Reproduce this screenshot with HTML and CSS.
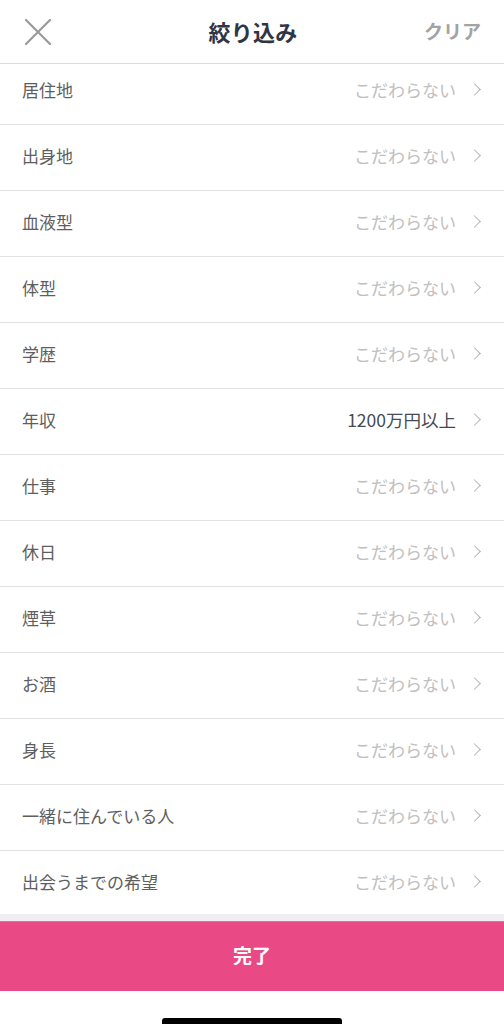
FILE: index.html
```html
<!DOCTYPE html>
<html lang="ja">
<head>
    <meta charset="UTF-8">
    <meta name="viewport" content="width=device-width, initial-scale=1.0">
    <title>絞り込み</title>
    <link rel="stylesheet" href="styles.css">
</head>
<body>
    <div class="screen">
        <header class="top-bar">
            <svg class="close-icon" width="26" height="26" viewBox="0 0 26 26">
                <path d="M1 1 L25 25 M25 1 L1 25" stroke="#9a9a9a" stroke-width="2.2" stroke-linecap="round" fill="none"/>
            </svg>
            <h1 class="title">絞り込み</h1>
            <span class="clear">クリア</span>
        </header>

        <ul class="filter-list">
            <li class="row"><span class="label">居住地</span><span class="value">こだわらない</span><span class="chevron"></span></li>
            <li class="row"><span class="label">出身地</span><span class="value">こだわらない</span><span class="chevron"></span></li>
            <li class="row"><span class="label">血液型</span><span class="value">こだわらない</span><span class="chevron"></span></li>
            <li class="row"><span class="label">体型</span><span class="value">こだわらない</span><span class="chevron"></span></li>
            <li class="row"><span class="label">学歴</span><span class="value">こだわらない</span><span class="chevron"></span></li>
            <li class="row"><span class="label">年収</span><span class="value set">1200万円以上</span><span class="chevron"></span></li>
            <li class="row"><span class="label">仕事</span><span class="value">こだわらない</span><span class="chevron"></span></li>
            <li class="row"><span class="label">休日</span><span class="value">こだわらない</span><span class="chevron"></span></li>
            <li class="row"><span class="label">煙草</span><span class="value">こだわらない</span><span class="chevron"></span></li>
            <li class="row"><span class="label">お酒</span><span class="value">こだわらない</span><span class="chevron"></span></li>
            <li class="row"><span class="label">身長</span><span class="value">こだわらない</span><span class="chevron"></span></li>
            <li class="row"><span class="label">一緒に住んでいる人</span><span class="value">こだわらない</span><span class="chevron"></span></li>
            <li class="row last"><span class="label">出会うまでの希望</span><span class="value">こだわらない</span><span class="chevron"></span></li>
        </ul>

        <div class="footer">
            <button class="done">完了</button>
            <div class="home-area"><div class="home-bar"></div></div>
        </div>
    </div>
</body>
</html>
```

FILE: styles.css
```css
body {
    margin: 0;
    background: #ffffff;
    font-family: "Noto Sans CJK JP", "Noto Sans", sans-serif;
}

.screen {
    width: 504px;
    height: 1024px;
    display: flex;
    flex-direction: column;
    overflow: hidden;
}

.top-bar {
    height: 63px;
    border-bottom: 1px solid #dcdcdc;
    display: grid;
    grid-template-columns: 1fr auto 1fr;
    align-items: center;
    padding: 0 23px 0 25px;
}

.close-icon {
    display: block;
    margin-top: 1px;
}

.title {
    margin: 0 0 2px;
    font-size: 22px;
    font-weight: 700;
    color: #2f3545;
    letter-spacing: 0.3px;
}

.clear {
    justify-self: end;
    margin-bottom: 2px;
    font-size: 19px;
    font-weight: 700;
    color: #a3a3a3;
}

.filter-list {
    list-style: none;
    margin: 0;
    padding: 0;
}

.row {
    box-sizing: border-box;
    height: 66px;
    border-bottom: 1px solid #e2e2e2;
    display: flex;
    align-items: center;
    padding: 0 22px 4px;
    font-size: 17px;
}

.row:first-child {
    height: 61px;
    padding-bottom: 9px;
}

.row.last {
    height: 63px;
    border-bottom: none;
    padding-bottom: 2px;
}

.label {
    flex: 1;
    color: #5e5e5e;
}

.value {
    color: #c0c0c0;
}

.value.set {
    font-size: 17.5px;
    color: #454a55;
}

.chevron {
    width: 8px;
    height: 8px;
    border-top: 1.8px solid #b5b5b5;
    border-right: 1.8px solid #b5b5b5;
    transform: rotate(45deg);
    margin-left: 14px;
    margin-right: 3px;
}

.footer {
    border-top: 7px solid #f0eef5;
    flex: 1;
    display: flex;
    flex-direction: column;
}

.done {
    height: 70px;
    border: none;
    border-top: 1px solid #e86b9b;
    background: #e94a86;
    color: #ffffff;
    font-family: inherit;
    font-size: 19px;
    font-weight: 700;
    padding: 0 0 4px;
}

.home-area {
    flex: 1;
    display: flex;
    justify-content: center;
    align-items: flex-end;
}

.home-bar {
    width: 180px;
    height: 6px;
    background: #000000;
    border-radius: 3px 3px 0 0;
}
```
